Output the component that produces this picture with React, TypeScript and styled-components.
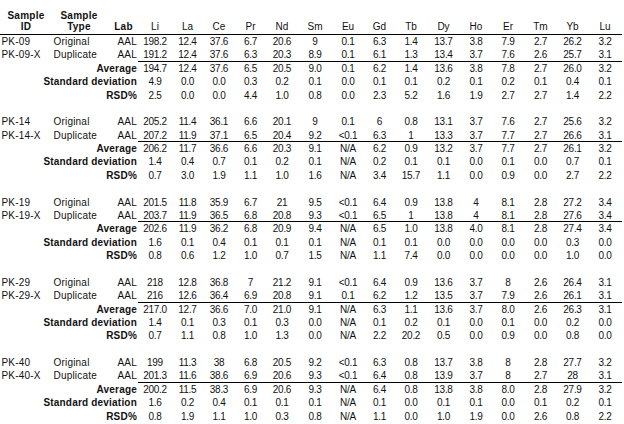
import React from 'react';
import styled, { createGlobalStyle } from 'styled-components';

const GlobalStyle = createGlobalStyle`
  html, body { margin: 0; padding: 0; background: #ffffff; }
  body { font-family: "Liberation Sans", Arial, Helvetica, sans-serif; color: #111111; }
`;

const VALUE_COLS = [34, 31, 32, 31, 32, 34, 32, 31, 32, 33, 32, 32, 33, 31, 34];
const TEMPLATE = `52px 54px 32px ${VALUE_COLS.map((w) => `${w}px`).join(' ')}`;
const ROW_H = '13.375px';

const ELEMENTS = ['Li', 'La', 'Ce', 'Pr', 'Nd', 'Sm', 'Eu', 'Gd', 'Tb', 'Dy', 'Ho', 'Er', 'Tm', 'Yb', 'Lu'];

type Group = {
  id: string;
  original: string[];
  duplicate: string[];
  average: string[];
  sd: string[];
  rsd: string[];
};

const GROUPS: Group[] = [
  {
    id: 'PK-09',
    original: ['198.2', '12.4', '37.6', '6.7', '20.6', '9', '0.1', '6.3', '1.4', '13.7', '3.8', '7.9', '2.7', '26.2', '3.2'],
    duplicate: ['191.2', '12.4', '37.6', '6.3', '20.3', '8.9', '0.1', '6.1', '1.3', '13.4', '3.7', '7.6', '2.6', '25.7', '3.1'],
    average: ['194.7', '12.4', '37.6', '6.5', '20.5', '9.0', '0.1', '6.2', '1.4', '13.6', '3.8', '7.8', '2.7', '26.0', '3.2'],
    sd: ['4.9', '0.0', '0.0', '0.3', '0.2', '0.1', '0.0', '0.1', '0.1', '0.2', '0.1', '0.2', '0.1', '0.4', '0.1'],
    rsd: ['2.5', '0.0', '0.0', '4.4', '1.0', '0.8', '0.0', '2.3', '5.2', '1.6', '1.9', '2.7', '2.7', '1.4', '2.2'],
  },
  {
    id: 'PK-14',
    original: ['205.2', '11.4', '36.1', '6.6', '20.1', '9', '0.1', '6', '0.8', '13.1', '3.7', '7.6', '2.7', '25.6', '3.2'],
    duplicate: ['207.2', '11.9', '37.1', '6.5', '20.4', '9.2', '<0.1', '6.3', '1', '13.3', '3.7', '7.7', '2.7', '26.6', '3.1'],
    average: ['206.2', '11.7', '36.6', '6.6', '20.3', '9.1', 'N/A', '6.2', '0.9', '13.2', '3.7', '7.7', '2.7', '26.1', '3.2'],
    sd: ['1.4', '0.4', '0.7', '0.1', '0.2', '0.1', 'N/A', '0.2', '0.1', '0.1', '0.0', '0.1', '0.0', '0.7', '0.1'],
    rsd: ['0.7', '3.0', '1.9', '1.1', '1.0', '1.6', 'N/A', '3.4', '15.7', '1.1', '0.0', '0.9', '0.0', '2.7', '2.2'],
  },
  {
    id: 'PK-19',
    original: ['201.5', '11.8', '35.9', '6.7', '21', '9.5', '<0.1', '6.4', '0.9', '13.8', '4', '8.1', '2.8', '27.2', '3.4'],
    duplicate: ['203.7', '11.9', '36.5', '6.8', '20.8', '9.3', '<0.1', '6.5', '1', '13.8', '4', '8.1', '2.8', '27.6', '3.4'],
    average: ['202.6', '11.9', '36.2', '6.8', '20.9', '9.4', 'N/A', '6.5', '1.0', '13.8', '4.0', '8.1', '2.8', '27.4', '3.4'],
    sd: ['1.6', '0.1', '0.4', '0.1', '0.1', '0.1', 'N/A', '0.1', '0.1', '0.0', '0.0', '0.0', '0.0', '0.3', '0.0'],
    rsd: ['0.8', '0.6', '1.2', '1.0', '0.7', '1.5', 'N/A', '1.1', '7.4', '0.0', '0.0', '0.0', '0.0', '1.0', '0.0'],
  },
  {
    id: 'PK-29',
    original: ['218', '12.8', '36.8', '7', '21.2', '9.1', '<0.1', '6.4', '0.9', '13.6', '3.7', '8', '2.6', '26.4', '3.1'],
    duplicate: ['216', '12.6', '36.4', '6.9', '20.8', '9.1', '0.1', '6.2', '1.2', '13.5', '3.7', '7.9', '2.6', '26.1', '3.1'],
    average: ['217.0', '12.7', '36.6', '7.0', '21.0', '9.1', 'N/A', '6.3', '1.1', '13.6', '3.7', '8.0', '2.6', '26.3', '3.1'],
    sd: ['1.4', '0.1', '0.3', '0.1', '0.3', '0.0', 'N/A', '0.1', '0.2', '0.1', '0.0', '0.1', '0.0', '0.2', '0.0'],
    rsd: ['0.7', '1.1', '0.8', '1.0', '1.3', '0.0', 'N/A', '2.2', '20.2', '0.5', '0.0', '0.9', '0.0', '0.8', '0.0'],
  },
  {
    id: 'PK-40',
    original: ['199', '11.3', '38', '6.8', '20.5', '9.2', '<0.1', '6.3', '0.8', '13.7', '3.8', '8', '2.8', '27.7', '3.2'],
    duplicate: ['201.3', '11.6', '38.6', '6.9', '20.6', '9.3', '<0.1', '6.4', '0.8', '13.9', '3.7', '8', '2.7', '28', '3.1'],
    average: ['200.2', '11.5', '38.3', '6.9', '20.6', '9.3', 'N/A', '6.4', '0.8', '13.8', '3.8', '8.0', '2.8', '27.9', '3.2'],
    sd: ['1.6', '0.2', '0.4', '0.1', '0.1', '0.1', 'N/A', '0.1', '0.0', '0.1', '0.1', '0.0', '0.1', '0.2', '0.1'],
    rsd: ['0.8', '1.9', '1.1', '1.0', '0.3', '0.8', 'N/A', '1.1', '0.0', '1.0', '1.9', '0.0', '2.6', '0.8', '2.2'],
  },
];

const Sheet = styled.div`
  width: 622px;
  display: flex;
  flex-direction: column;
  font-size: 10px;
`;

const HeaderRow = styled.div`
  display: grid;
  grid-template-columns: ${TEMPLATE};
  height: 34px;
  align-items: end;
  border-bottom: 1px solid #000;
`;

const HeadCell = styled.div<{ $bold?: boolean; $shift?: number }>`
  text-align: center;
  line-height: 11.6px;
  padding-bottom: 1px;
  padding-left: ${(p) => (p.$shift ? `${p.$shift}px` : '0')};
  font-weight: ${(p) => (p.$bold ? 'bold' : 'normal')};
  letter-spacing: ${(p) => (p.$bold ? '0.25px' : '0')};
  white-space: pre-line;
`;

const Row = styled.div`
  display: grid;
  grid-template-columns: ${TEMPLATE};
  height: ${ROW_H};
  line-height: ${ROW_H};
`;

const Spacer = styled.div`
  height: ${ROW_H};
`;

const TextCell = styled.div<{ $align?: 'left' | 'right' }>`
  text-align: ${(p) => p.$align ?? 'left'};
  padding: ${(p) => (p.$align === 'right' ? '0 1px 0 0' : '0 0 0 1.5px')};
  letter-spacing: 0.2px;
  white-space: nowrap;
`;

const LabelCell = styled.div`
  grid-column: 1 / 4;
  text-align: right;
  padding-right: 1px;
  font-weight: bold;
  letter-spacing: 0.2px;
  white-space: nowrap;
`;

const NumCell = styled.div<{ $rule?: boolean }>`
  text-align: center;
  letter-spacing: -0.3px;
  white-space: nowrap;
  box-shadow: ${(p) => (p.$rule ? 'inset 0 -1px 0 #000' : 'none')};
`;

const Values: React.FC<{ values: string[]; rule?: boolean }> = ({ values, rule }) => (
  <>
    {values.map((v, i) => (
      <NumCell key={i} $rule={rule}>
        {v}
      </NumCell>
    ))}
  </>
);

const GroupBlock: React.FC<{ group: Group; last: boolean }> = ({ group, last }) => (
  <>
    <Row>
      <TextCell>{group.id}</TextCell>
      <TextCell>Original</TextCell>
      <TextCell $align="right">AAL</TextCell>
      <Values values={group.original} />
    </Row>
    <Row>
      <TextCell>{group.id}-X</TextCell>
      <TextCell>Duplicate</TextCell>
      <TextCell $align="right">AAL</TextCell>
      <Values values={group.duplicate} rule />
    </Row>
    <Row>
      <LabelCell>Average</LabelCell>
      <Values values={group.average} />
    </Row>
    <Row>
      <LabelCell>Standard deviation</LabelCell>
      <Values values={group.sd} />
    </Row>
    <Row>
      <LabelCell>RSD%</LabelCell>
      <Values values={group.rsd} />
    </Row>
    {!last && <Spacer />}
  </>
);

export default function App() {
  return (
    <>
      <GlobalStyle />
      <Sheet>
        <HeaderRow>
          <HeadCell $bold>{'Sample\nID'}</HeadCell>
          <HeadCell $bold>{'Sample\nType'}</HeadCell>
          <HeadCell $bold $shift={3}>Lab</HeadCell>
          {ELEMENTS.map((el) => (
            <HeadCell key={el}>{el}</HeadCell>
          ))}
        </HeaderRow>
        {GROUPS.map((g, i) => (
          <GroupBlock key={g.id} group={g} last={i === GROUPS.length - 1} />
        ))}
      </Sheet>
    </>
  );
}
